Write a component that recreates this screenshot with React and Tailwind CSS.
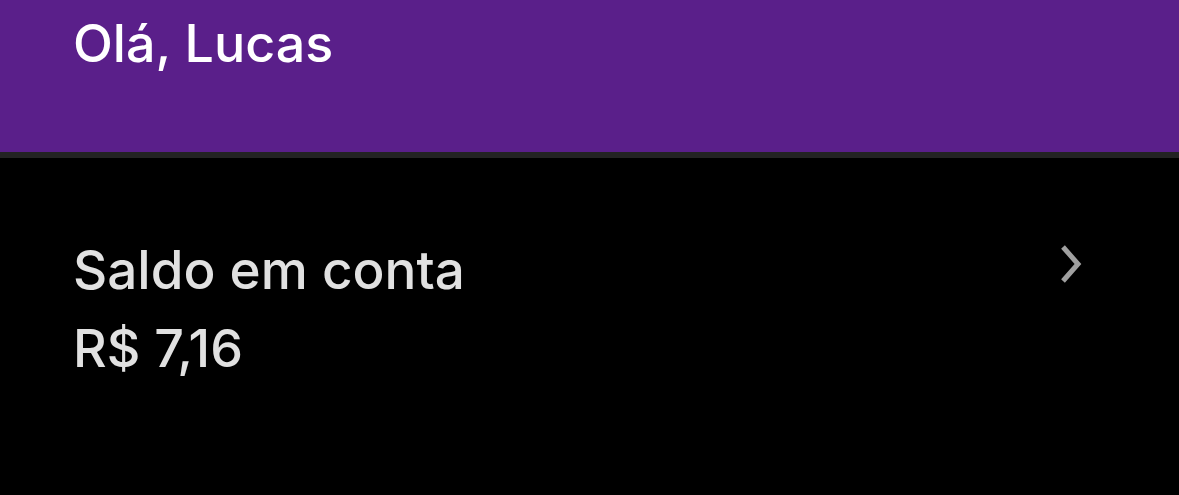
import React from 'react';

const App = () => {
    return (
        <div className="w-[1179px] h-[495px] bg-black overflow-hidden" style={{ fontFamily: 'Inter, "Noto Sans", sans-serif' }}>
            <div className="h-[152px] bg-[#5a1f8a] px-[73px] pt-[15px]">
                <h1 className="text-[52px] leading-[58px] font-medium text-white">Olá, Lucas</h1>
            </div>
            <div className="h-[6px] bg-[#232323]"></div>

            <div className="flex justify-between items-start pl-[73px] pr-[96px] pt-[83px]">
                <div>
                    <div className="text-[53px] leading-[58px] font-medium text-[#e1e1e1]">Saldo em conta</div>
                    <div className="text-[52px] leading-[58px] font-medium text-[#e1e1e1] mt-[21px]">R$ 7,16</div>
                </div>
                <svg className="mt-[3px]" width="24" height="40" viewBox="0 0 24 40" fill="none">
                    <path d="M4 3 L19 20 L4 37" stroke="#a0a0a0" strokeWidth="5" />
                </svg>
            </div>
        </div>
    );
};

export default App;
